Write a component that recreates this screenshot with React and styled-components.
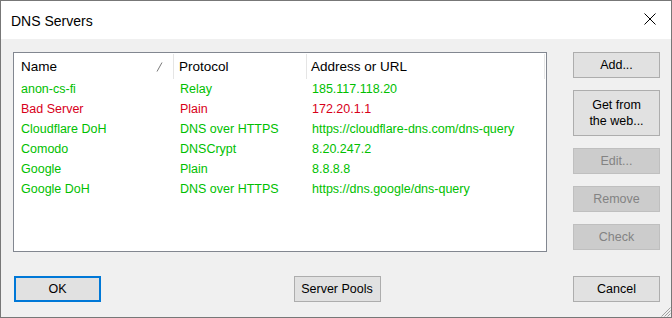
import React from 'react';
import styled, { createGlobalStyle } from 'styled-components';

const GlobalStyle = createGlobalStyle`
  html, body {
    margin: 0;
    padding: 0;
    background: #ffffff;
  }
  * {
    box-sizing: border-box;
  }
`;

const servers = [
  { name: 'anon-cs-fi', protocol: 'Relay', address: '185.117.118.20' },
  { name: 'Bad Server', protocol: 'Plain', address: '172.20.1.1', bad: true },
  { name: 'Cloudflare DoH', protocol: 'DNS over HTTPS', address: 'https://cloudflare-dns.com/dns-query' },
  { name: 'Comodo', protocol: 'DNSCrypt', address: '8.20.247.2' },
  { name: 'Google', protocol: 'Plain', address: '8.8.8.8' },
  { name: 'Google DoH', protocol: 'DNS over HTTPS', address: 'https://dns.google/dns-query' },
];

function App() {
  return (
    <>
      <GlobalStyle />
      <Window>
        <TitleBar>
          <Title>DNS Servers</Title>
          <CloseIcon width="12" height="12" viewBox="0 0 12 12">
            <path d="M0.5 0.5 L11.5 11.5 M11.5 0.5 L0.5 11.5" stroke="#000" strokeWidth="1" fill="none" />
          </CloseIcon>
        </TitleBar>
        <Client>
          <Top>
            <ListBox>
              <Header>
                <HeaderCell $pad={7}>
                  <span>Name</span>
                  <SortMark width="7" height="10" viewBox="0 0 7 10">
                    <path d="M6 0.5 L1 9.5" stroke="#7a7a7a" strokeWidth="1" fill="none" />
                  </SortMark>
                </HeaderCell>
                <HeaderCell $pad={5}>Protocol</HeaderCell>
                <HeaderCell $pad={4}>Address or URL</HeaderCell>
              </Header>
              {servers.map((s) => (
                <Row key={s.name} $bad={s.bad}>
                  <Cell $pad={7}>{s.name}</Cell>
                  <Cell $pad={6}>{s.protocol}</Cell>
                  <Cell $pad={5}>{s.address}</Cell>
                </Row>
              ))}
            </ListBox>
            <SideButtons>
              <Button>Add...</Button>
              <Button $tall>Get from<br />the web...</Button>
              <Button disabled>Edit...</Button>
              <Button disabled>Remove</Button>
              <Button disabled>Check</Button>
            </SideButtons>
          </Top>
          <Bottom>
            <Button $default>OK</Button>
            <Button>Server Pools</Button>
            <Button>Cancel</Button>
          </Bottom>
          <Grip width="11" height="11" viewBox="0 0 11 11">
            <path d="M10.5 1.5 L1.5 10.5 M10.5 4.5 L4.5 10.5 M10.5 7.5 L7.5 10.5" stroke="#a0a0a0" strokeWidth="1" fill="none" />
          </Grip>
        </Client>
      </Window>
    </>
  );
}

const Window = styled.div`
  width: 672px;
  height: 318px;
  border: 1px solid #777777;
  display: flex;
  flex-direction: column;
  font-family: 'Liberation Sans', Arial, sans-serif;
  color: #000;
`;

const TitleBar = styled.div`
  height: 38px;
  background: #ffffff;
  display: flex;
  align-items: center;
  justify-content: space-between;
  padding: 0 15px 0 10px;
`;

const Title = styled.span`
  font-size: 14px;
  padding-top: 1px;
`;

const CloseIcon = styled.svg`
  display: block;
  margin-top: -2px;
`;

const Client = styled.div`
  flex: 1;
  position: relative;
  background: #f0f0f0;
  padding: 13px 11px 15px 12px;
  display: flex;
  flex-direction: column;
`;

const Top = styled.div`
  display: flex;
  gap: 26px;
`;

const ListBox = styled.div`
  width: 534px;
  height: 200px;
  background: #ffffff;
  border: 1px solid #828790;
`;

const Header = styled.div`
  display: grid;
  grid-template-columns: 160px 133px 238px;
  height: 25px;
  margin-bottom: 1px;
`;

const HeaderCell = styled.div`
  display: flex;
  align-items: center;
  justify-content: space-between;
  padding-left: ${(p) => p.$pad}px;
  padding-right: 10px;
  font-size: 13.5px;
  line-height: 25px;
  border-right: 1px solid #e5e5e5;
  margin: 1px 0 1px;
`;

const SortMark = styled.svg`
  display: block;
  margin-top: 1px;
`;

const Row = styled.div`
  display: grid;
  grid-template-columns: 160px 133px 238px;
  height: 20px;
  font-size: 12.5px;
  line-height: 20px;
  color: ${(p) => (p.$bad ? '#d8001a' : '#00c000')};
`;

const Cell = styled.div`
  padding-left: ${(p) => p.$pad}px;
  white-space: nowrap;
`;

const SideButtons = styled.div`
  display: flex;
  flex-direction: column;
  gap: 12px;
`;

const Button = styled.button`
  width: 87px;
  height: ${(p) => (p.$tall ? '46px' : '26px')};
  padding: 0;
  background: #e1e1e1;
  border: ${(p) => (p.$default ? '2px solid #0078d7' : '1px solid #adadad')};
  font-family: 'Liberation Sans', Arial, sans-serif;
  font-size: 12.5px;
  line-height: 16px;
  color: #000;
  text-align: center;

  &:disabled {
    background: #cccccc;
    border-color: #bfbfbf;
    color: #838383;
  }
`;

const Bottom = styled.div`
  margin-top: 24px;
  display: flex;
  justify-content: space-between;
  padding-left: 1px;
`;

const Grip = styled.svg`
  position: absolute;
  right: 0;
  bottom: 0;
  display: block;
`;

export default App;
